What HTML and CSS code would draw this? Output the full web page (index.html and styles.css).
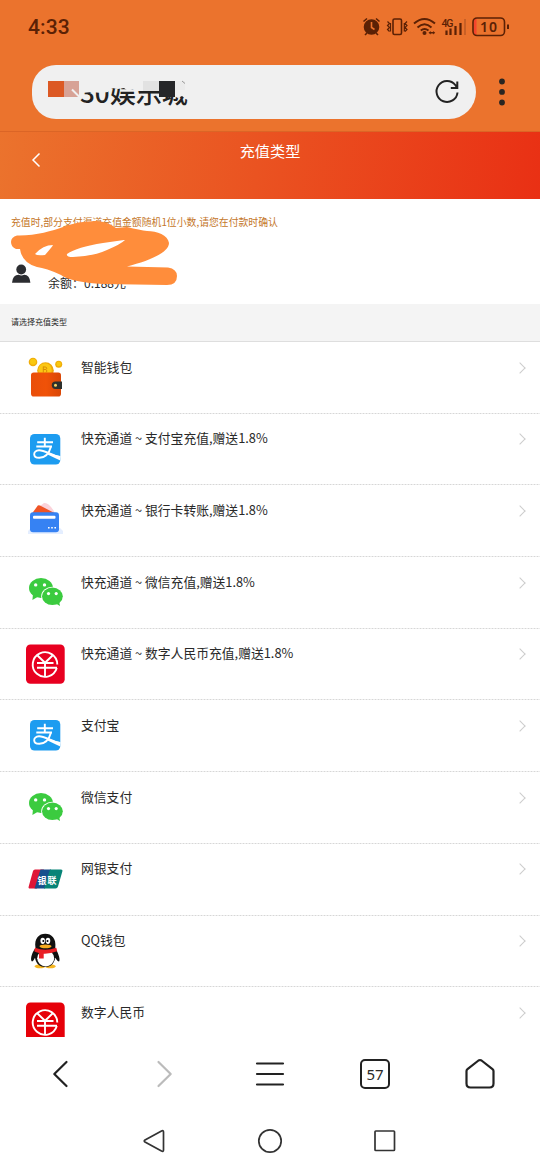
FILE: index.html
```html
<!DOCTYPE html>
<html lang="zh-CN">
<head>
<meta charset="utf-8">
<title>充值类型</title>
<link rel="stylesheet" href="styles.css">
</head>
<body>
<svg class="defs" width="0" height="0">
  <defs>
    <linearGradient id="leather" x1="0" x2="1"><stop offset="0" stop-color="#e94e0a"/><stop offset=".5" stop-color="#f05208"/><stop offset="1" stop-color="#d94706"/></linearGradient>
    <symbol id="wallet" viewBox="24 0 42 71">
      <circle cx="33" cy="20" r="4.3" fill="#f0ad09"/><circle cx="33" cy="19.7" r="3" fill="#f9c80f"/>
      <circle cx="58.7" cy="22.3" r="3.5" fill="#f0ad09"/><circle cx="58.7" cy="22" r="2.3" fill="#f9c80f"/>
      <circle cx="45.5" cy="28.5" r="8.3" fill="#eea708"/><circle cx="45" cy="28" r="6.8" fill="#fbc714"/>
      <path d="M43.3 24.5v6M43.3 25h2.5q2 1.2 0 2.5h-2.5M46 27.5q2 1.5 0 3" fill="none" stroke="#d98d05" stroke-width="1"/>
      <rect x="31" y="30.5" width="30" height="24" rx="2.8" fill="url(#leather)"/>
      <path d="M62 39.5h-6.5a3.7 3.7 0 0 0 0 7.400H62z" fill="#2e302d"/><circle cx="55.500" cy="43.200" r="1.500" fill="#f6d365"/>
    </symbol>
    <symbol id="alipay" viewBox="24 0 42 71">
      <rect x="30" y="20" width="30.300" height="30.600" rx="4.500" fill="#1d9cf0"/>
      <path d="M37.200 28.200H53M36.300 32.500H52M44.800 23.800V32.500M51 32.500C49.500 38 46 43.600 39.500 43.800C32.500 44 32.500 36.500 39 36.300C44.500 36.200 52 41.500 60.300 43.200" fill="none" stroke="#fff" stroke-width="1.900"/>
      <path d="M49 38.800Q55 41.400 60.300 42v4.400Q54 43.700 47.600 40.500z" fill="#fff"/>
    </symbol>
    <symbol id="card" viewBox="24 0 42 71">
      <path d="M28 46L31 43H60L63 46V49H28z" fill="#e4eeff"/>
      <path d="M40 21L44 18Q49 17 55 28L53 30z" fill="#fbd3da"/>
      <path d="M37.800 20.600Q38.600 20 40 20.600L55.500 28.500H32z" fill="#ef5426"/>
      <rect x="30" y="27.300" width="29" height="19.900" rx="3" fill="#3682f3"/>
      <rect x="33" y="30.800" width="22.500" height="2.900" rx="1" fill="#fff"/>
      <path d="M48 42.800h1.600M51.200 42.800h1.600M54.400 42.800H56" stroke="#fff" stroke-width="1.600"/>
    </symbol>
    <symbol id="wechat" viewBox="24 0 42 71">
      <path d="M33 37l-.6 6 5-3z" fill="#3bcb3f"/><ellipse cx="41" cy="31" rx="12" ry="10" fill="#3bcb3f"/>
      <ellipse cx="52.300" cy="39.200" rx="11.100" ry="9.400" fill="#fff"/>
      <path d="M55 46l5 3-1-5z" fill="#3bcb3f"/><ellipse cx="52.400" cy="39.300" rx="10.400" ry="8.700" fill="#3bcb3f"/>
      <g fill="#fff"><circle cx="35.700" cy="27.900" r="1.700"/><circle cx="44.500" cy="27.900" r="1.700"/><circle cx="48.500" cy="36.600" r="1.600"/><circle cx="56.200" cy="36.600" r="1.600"/></g>
    </symbol>
    <symbol id="ecny" viewBox="24 0 42 71">
      <rect x="26" y="15.500" width="38.700" height="39.200" rx="4.500"/>
      <g fill="none" stroke="#fff" stroke-width="1.900"><path d="M56.800 39A12.300 12.300 0 1 1 57.300 35.500"/><path d="M37.500 26.500L45 33.800L52.500 26.500M45 33V47M37 34H53.500M37 38.800H57"/></g>
    </symbol>
    <symbol id="unionpay" viewBox="24 0 42 71">
      <path d="M35 25.500H44L37 44.600H30Q28 44.600 28.700 42.500L33 27Q33.500 25.500 35 25.500z" fill="#df1637"/>
      <path d="M40.500 25.500H51L45 44.600H34.500z" fill="#174f8d"/>
      <path d="M50 25.500H61Q63 25.500 62.400 27.300L58 42.500Q57.400 44.600 55.500 44.600H44z" fill="#078477"/>
      <text class="union-text" x="37.500" y="39.700" textLength="19" fill="#fff">银联</text>
    </symbol>
    <symbol id="qq" viewBox="24 0 42 71">
      <ellipse cx="40" cy="50.300" rx="5.500" ry="2" fill="#f5b520"/><ellipse cx="50.300" cy="50.300" rx="5.500" ry="2" fill="#f5b520"/>
      <path d="M35.500 32C32.500 36 30 42 31.600 45.300C32.800 46 34 44 35 41.800C36 48 40 51 45.300 51C50.500 51 54 48 55.300 41.800C56.500 44 58 46 59.300 45.300C60.500 42 57.500 36 55.300 32C56.500 22 51.500 17.700 45.300 17.700C39 17.700 34 22 35.500 32z" fill="#111"/>
      <ellipse cx="45.700" cy="42.200" rx="8.500" ry="8.200" fill="#fff"/>
      <ellipse cx="42.700" cy="24.800" rx="2.300" ry="3.100" fill="#fff"/><ellipse cx="48" cy="24.800" rx="2.300" ry="3.100" fill="#fff"/><circle cx="43.300" cy="25" r="1"/><circle cx="47.500" cy="25" r="1"/>
      <ellipse cx="45.500" cy="30.300" rx="6" ry="1.900" fill="#f6ab20"/>
      <path d="M35 31.700Q45 35.700 56.300 31.700L57.200 35.300Q50 38 43.700 37.700V42.500H39V37Q36 36.200 34.300 35.200z" fill="#e91f25"/>
    </symbol>
  </defs>
</svg>

<div class="browser-top">
  <div class="status">
    <span class="clock">4:33</span>
    <svg class="status-icons" viewBox="360 15 152 24">
      <g fill="none" stroke="#5b2105" stroke-width="1.600">
        <circle cx="371.500" cy="27" r="7" fill="#5b2105"/><path d="M363.500 21.500l3.500-3M379.500 21.500l-3.500-3M367 33l-2 2M376 33l2 2"/><path d="M371.500 22v5.500l3 2" stroke="#ec722c"/>
        <rect x="393" y="19" width="8.500" height="15.500" rx="1.500"/><path d="M387.500 21.500l2 2-2 2 2 2-2 2 2 2M390.500 23v8.500M407 21.500l-2 2 2 2-2 2 2 2-2 2M404.300 23v8.500" stroke-width="1.200"/>
        <path d="M414 23.500Q424.500 14.500 435 23.500M417.500 27.500Q424.500 21 431.500 27.500M420.800 30.500Q424.500 27.500 428.500 30.500" stroke-width="2"/>
        <path d="M446.500 30.500V35M450.500 28.500V35M455.500 26V35M460.500 23V35" stroke-width="2.200"/><path d="M465 19V35" stroke="#bd5a24" stroke-width="1.500"/>
        <path d="M476.500 18.500q-3 .5-3 3v10.500q0 2.500 3 3z" fill="#f5452c" stroke="none"/><rect x="473" y="18" width="31.500" height="17.500" rx="4"/><path d="M508 24.500v4.500" stroke-width="2"/>
      </g>
      <circle cx="424.500" cy="33" r="2" fill="#5b2105"/><path d="M428.500 32.800l2.200-1.800v1h2.500v-1l2 1.800-2 1.700v-1h-2.500v1z" fill="#5b2105"/>
      <text class="network" x="441.500" y="26.500" textLength="12">4G</text><text class="battery" x="480" y="32" textLength="17">10</text>
    </svg>
  </div>
  <div class="address-row">
    <div class="address">
      <div class="site"><span class="site-name">30娱乐城</span>
        <svg class="mosaic" viewBox="32 64 180 54">
          <path d="M76 74H192V91L186 98L182 95L178 97L172 94L167 90.500L159 90H138L133 88L128 90L124 87L118 88L112 87L108 91L101 92L92 91L82 92H76z" fill="#f0f0f0"/>
          <path d="M48 80h16v16H48z" fill="#dc5924"/><path d="M64 80h15v16H64z" fill="#d7a296"/><path d="M72 88.500l7.500 7.500" stroke="#f0f0f0" stroke-width="2"/>
          <path d="M143 80h16v10h-16z" fill="#e2e2e2"/><path d="M159 80h16v16h-16z" fill="#252628"/><path d="M175 80h10v9h-10z" fill="#ebebeb"/><path d="M182 80l3 2.500" stroke="#999"/>
        </svg>
      </div>
      <svg class="reload" viewBox="433 78 28 28"><path d="M457.500 92.500A10.500 10.500 0 1 1 455.300 85L457 87.500M457.300 81.500V88H450.800" fill="none" stroke="#222" stroke-width="2"/></svg>
    </div>
    <svg class="more" viewBox="0 0 8 28"><circle cx="4" cy="3.500" r="2.900"/><circle cx="4" cy="13.900" r="2.900"/><circle cx="4" cy="24.500" r="2.900"/></svg>
  </div>
</div>

<header class="page-head">
  <svg class="head-back" viewBox="0 0 12 18"><path d="M9.500 2.500L3 9l6.500 6.500" fill="none" stroke="#fff" stroke-width="1.500"/></svg>
  <h1>充值类型</h1><span></span>
</header>
<section class="account">
  <p class="notice">充值时,部分支付渠道充值金额随机1位小数,请您在付款时确认</p>
  <div class="user"><svg class="person" viewBox="0 0 20 20"><circle cx="10.200" cy="5.500" r="4.900"/><path d="M1 18.700Q1.700 11 7.700 10.800Q10.200 12 13.200 10.800Q18.700 11 19.400 18.700z"/></svg><span class="balance">余额：0.188元</span></div>
  <svg class="scribble" viewBox="0 199 200 100">
    <path fill="#ff8d3b" fill-rule="evenodd" d="M17 235.500C35 236 52 231 63 227Q78 221 96 221Q109 222 116 228L127 227Q140 230 147 231C157 231 168 235 169 243C169 253 148 261 127 266.500L168 267.500Q177 269 177 276Q177 285 167 285L103 284Q70 282 61 275Q46 268 37 267Q22 263 20 249H16Q11 247 11 242Q11 237 17 235.500zM53 245Q43 245 35 254Q37 256 45 255Q52 247 53 245zM124 240L103 243Q77 247 67 254Q66 257 73 257Q94 256 107 250Q121 244 125 240z"/>
  </svg>
</section>
<div class="prompt">请选择充值类型</div>

<main class="channels">
  <div class="channel"><svg><use href="#wallet"/></svg><span>智能钱包</span><i></i></div>
  <div class="channel"><svg><use href="#alipay"/></svg><span>快充通道 ~ 支付宝充值,赠送1.8%</span><i></i></div>
  <div class="channel"><svg><use href="#card"/></svg><span>快充通道 ~ 银行卡转账,赠送1.8%</span><i></i></div>
  <div class="channel"><svg><use href="#wechat"/></svg><span>快充通道 ~ 微信充值,赠送1.8%</span><i></i></div>
  <div class="channel"><svg class="crimson"><use href="#ecny"/></svg><span>快充通道 ~ 数字人民币充值,赠送1.8%</span><i></i></div>
  <div class="channel"><svg><use href="#alipay"/></svg><span>支付宝</span><i></i></div>
  <div class="channel"><svg><use href="#wechat"/></svg><span>微信支付</span><i></i></div>
  <div class="channel"><svg><use href="#unionpay"/></svg><span>网银支付</span><i></i></div>
  <div class="channel"><svg><use href="#qq"/></svg><span>QQ钱包</span><i></i></div>
  <div class="channel"><svg class="red"><use href="#ecny"/></svg><span>数字人民币</span><i></i></div>
</main>

<nav class="toolbar">
  <svg viewBox="0 0 32 32"><path d="M22.500 4L10.300 16l12.200 12"/></svg>
  <svg class="disabled" viewBox="0 0 32 32"><path d="M9.500 4L21.700 16L9.500 28"/></svg>
  <svg viewBox="0 0 32 32"><path d="M3 5.500H29M3 16H29M3 26.500H29"/></svg>
  <div class="tabs"><span>57</span></div>
  <svg viewBox="0 0 32 32"><path d="M2.500 13Q2.500 12 3.500 11.200L14.500 2.500Q16 1.500 17.500 2.500L28.500 11.200Q29.500 12 29.500 13V25.500Q29.500 29.500 25.500 29.500H6.500Q2.500 29.500 2.500 25.500z"/></svg>
</nav>
<div class="system-nav">
  <svg viewBox="0 0 26 26"><path d="M19.500 3Q21.500 2 21.500 4V22Q21.500 24 19.500 23L3 14Q1.500 13 3 12z"/></svg>
  <svg viewBox="0 0 26 26"><circle cx="13" cy="13" r="11.200"/></svg>
  <svg viewBox="0 0 26 26"><rect x="3" y="3" width="19.500" height="19.500" rx=".8"/></svg>
</div>
</body>
</html>
```
FILE: styles.css
```css
* { box-sizing: border-box; }
body {
  margin: 0;
  width: 540px;
  height: 1170px;
  overflow: hidden;
  display: flex;
  flex-direction: column;
  background: #fff;
  color: #292929;
  font-family: "Noto Sans CJK SC", "Noto Sans", sans-serif;
}
svg { display: block; flex: none; }
.defs { position: absolute; }

.browser-top { height: 131px; background: #eb732d; flex: none; }
.status { height: 64px; display: flex; justify-content: space-between; padding: 15px 28px 0; }
.clock { font: 500 21px/25px Roboto, sans-serif; color: #5b2105; letter-spacing: .1px; }
.status-icons { width: 152px; height: 24px; }
.network { font: 500 10.500px Roboto, sans-serif; fill: #5b2105; }
.battery { font: 600 14px "Noto Sans", sans-serif; fill: #5b2105; }
.address-row { display: flex; align-items: center; padding-left: 32px; gap: 22.500px; height: 54px; margin-top: .5px; }
.address {
  width: 443.500px;
  height: 54px;
  border-radius: 24px 27px 27px 24px;
  background: #f0f0f0;
  display: flex;
  justify-content: space-between;
  align-items: center;
  padding-right: 15px;
}
.site { position: relative; width: 180px; height: 54px; padding-left: 48px; }
.site-name { font-size: 26px; line-height: 54px; font-weight: 500; white-space: nowrap; color: #222; }
.mosaic { position: absolute; left: 0; top: 0; width: 180px; height: 54px; }
.reload { width: 28px; height: 28px; }
.more { width: 8px; height: 28px; fill: #292521; }

.page-head {
  height: 68px;
  flex: none;
  display: grid;
  grid-template-columns: 60px 1fr 60px;
  background: linear-gradient(100deg, #eb732d 0%, #e93014 100%);
  border-top: 1px solid #db6526;
}
.head-back { width: 12px; height: 18px; margin: 19px 0 0 30px; }
h1 { margin: 6px 0 0; text-align: center; font-size: 15.200px; line-height: 24px; font-weight: 400; color: #fff; }

.account { position: relative; height: 105px; flex: none; padding: 16px 11px 0; }
.notice { margin: 0; font-size: 9.850px; line-height: 15px; color: #c47629; white-space: nowrap; }
.user { display: flex; margin-top: 34px; }
.person { width: 20px; height: 20px; fill: #2c2d31; }
.balance { margin: 10px 0 0 17px; font-size: 12px; line-height: 18px; }
.scribble { position: absolute; left: 0; top: 0; width: 200px; height: 100px; }
.prompt { height: 38px; flex: none; padding-left: 11px; background: #f4f4f4; border-bottom: 1px solid #dedede; font-size: 8px; line-height: 36px; }

.channels { height: 695px; flex: none; overflow: hidden; }
.channel { height: 71.700px; display: flex; padding: 0 16px 0 24px; background: repeating-linear-gradient(90deg, #d6d6d6 0 1px, #ededed 1px 3px) bottom / 100% 1px no-repeat; }
.channel svg { width: 42px; height: 71px; }
.channel span { margin: 14.500px 0 0 15px; flex: 1; font-size: 12.800px; line-height: 20px; white-space: nowrap; }
.channel i { width: 8px; height: 8px; margin-top: 21.500px; border: solid #ccc; border-width: 1px 1px 0 0; transform: rotate(45deg); }
.crimson { fill: #e80020; }
.red { fill: #e60009; }
.union-text { font-size: 9px; font-weight: 700; }

.toolbar { height: 77px; flex: none; display: grid; grid-template-columns: repeat(5, 105px); justify-content: center; align-items: center; justify-items: center; padding-bottom: 3px; }
.toolbar svg { width: 32px; height: 32px; fill: none; stroke: #222; stroke-width: 2.200; stroke-linecap: round; stroke-linejoin: round; }
.toolbar .disabled { stroke: #bbb; }
.tabs { width: 30px; height: 30px; border: 2.400px solid #222; border-radius: 5px; display: grid; place-items: center; font: 15px/1 "Noto Sans", sans-serif; }
.system-nav { height: 56px; flex: none; display: grid; grid-template-columns: repeat(3, 115px); justify-content: center; justify-items: center; padding-top: 14px; }
.system-nav svg { width: 26px; height: 26px; fill: none; stroke: #333; stroke-width: 1.700; }
```
